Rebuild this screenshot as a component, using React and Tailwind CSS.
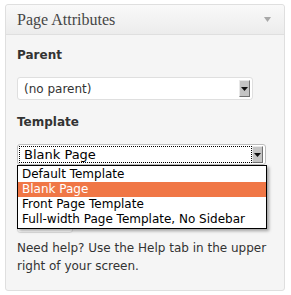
import React from 'react';

function SelectButton() {
  return (
    <span className="flex h-[17px] w-[11px] items-center justify-center border border-t-[#e8e8e8] border-l-[#e8e8e8] border-r-[#707070] border-b-[#707070] bg-[#c4c4c4]">
      <svg width="7" height="4" viewBox="0 0 7 4">
        <path d="M0 0h7L3.5 4z" fill="#111" />
      </svg>
    </span>
  );
}

const options = ['Default Template', 'Blank Page', 'Front Page Template', 'Full-width Page Template, No Sidebar'];

export default function App() {
  return (
    <div className="h-[295px] w-[291px] bg-white pt-[4px] pl-[5px]" style={{ fontFamily: '"DejaVu Sans", Verdana, sans-serif' }}>
      <div className="flex h-[287px] w-[280px] flex-col rounded-[3px] border border-[#dfdfdf] bg-[#f5f5f5]">
        <div className="flex h-[30px] items-center justify-between rounded-t-[3px] border-b border-[#dfdfdf] bg-gradient-to-b from-[#f9f9f9] to-[#ececec] pl-[11px] pr-[13px]">
          <h3 className="text-[16px] leading-none text-[#464646]" style={{ fontFamily: '"Liberation Serif", Georgia, serif' }}>
            Page Attributes
          </h3>
          <svg width="7" height="5" viewBox="0 0 7 5">
            <path d="M0 0h7L3.5 5z" fill="#a8a8a8" />
          </svg>
        </div>

        <div className="relative px-[11px] text-[12px] text-[#333]">
          <p className="mt-[11px] font-bold leading-[18px]">Parent</p>
          <div className="mt-[13px] flex h-[23px] w-[236px] items-center justify-between rounded-[3px] border border-[#dfdfdf] bg-white pl-[6px] pr-[2px]">
            <span>(no parent)</span>
            <SelectButton />
          </div>

          <p className="mt-[13px] font-bold leading-[18px]">Template</p>
          <div className="relative mt-[13px] flex h-[21px] w-[249px] items-center justify-between rounded-[3px] border border-[#bdbdbd] bg-white p-[1px] pr-[2px]">
            <span className="flex h-full flex-1 items-center border border-dotted border-black pl-[4px] text-[13px] text-black">Blank Page</span>
            <SelectButton />
            <ul className="absolute left-[-1px] top-[20px] z-10 w-[250px] border border-black bg-white py-[1px] text-[12px] leading-[15px] text-black shadow-[2px_2px_3px_rgba(0,0,0,0.35)]">
              {options.map((o) => (
                <li key={o} className={`pl-[4px] ${o === 'Blank Page' ? 'bg-[#f07746] text-white' : ''}`}>
                  {o}
                </li>
              ))}
            </ul>
          </div>

          <div className="mt-[13px] h-[18px]" />
          <div className="mt-[14px] h-[23px] w-[56px] rounded-[3px] border border-[#dfdfdf] bg-white" />

          <p className="mt-[6px] leading-[18px]">Need help? Use the Help tab in the upper right of your screen.</p>
        </div>
      </div>
    </div>
  );
}
